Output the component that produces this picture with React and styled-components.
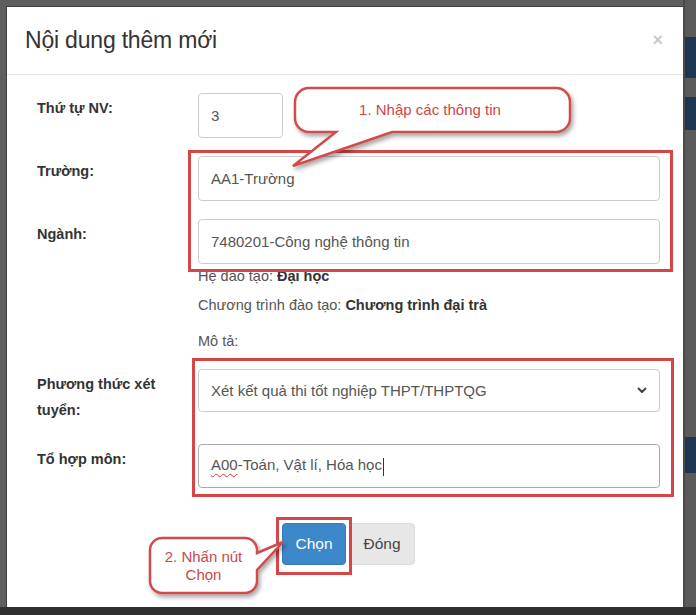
import React from 'react';
import styled, { createGlobalStyle } from 'styled-components';

const GlobalStyle = createGlobalStyle`
  html, body {
    margin: 0;
    padding: 0;
    background: #5e5e5e;
  }
  body {
    font-family: "Liberation Sans", Arial, sans-serif;
  }
  * { box-sizing: border-box; }
`;

const Page = styled.div`
  position: relative;
  width: 696px;
  height: 615px;
  overflow: hidden;
  display: flex;
  flex-direction: column;
  background: #5e5e5e;
`;

const Stage = styled.div`
  display: flex;
  height: 607px;
`;

const ModalWrap = styled.div`
  padding: 7px 0 0 7px;
`;

const Modal = styled.div`
  width: 676px;
  height: 600px;
  background: #fff;
  display: flex;
  flex-direction: column;
  box-shadow: 0 0 0 1px rgba(0, 0, 0, 0.35);
`;

const Header = styled.div`
  height: 68px;
  border-bottom: 1px solid #e5e5e5;
  display: flex;
  align-items: center;
  justify-content: space-between;
  padding: 0 20px 0 18px;
`;

const Title = styled.h4`
  margin: 0;
  font-size: 23px;
  font-weight: normal;
  color: #333;
  letter-spacing: -0.2px;
`;

const Close = styled.span`
  font-size: 18px;
  font-weight: bold;
  color: #cacaca;
`;

const Body = styled.div`
  padding: 18px 23px 0 30px;
`;

const Row = styled.div`
  display: grid;
  grid-template-columns: 161px 1fr;
  margin-top: ${p => p.$mt ?? 0}px;
  margin-bottom: ${p => p.$mb ?? 18}px;
`;

const Label = styled.div`
  font-size: 14.5px;
  font-weight: bold;
  line-height: 26px;
  padding-top: 2px;
  padding-right: 28px;
  color: #333;
`;

const Field = styled.div`
  width: ${p => p.$w ? `${p.$w}px` : '100%'};
  height: ${p => p.$h ?? 45}px;
  border: 1px solid ${p => p.$active ? '#a9a9a9' : '#ccc'};
  border-radius: 4px;
  padding: 0 12px;
  display: flex;
  align-items: center;
  justify-content: space-between;
  font-size: 15px;
  color: #555;
  background: #fff;
`;

const Typo = styled.span`
  text-decoration: underline wavy #e03030;
  text-decoration-thickness: 1px;
  text-underline-offset: 3px;
`;

const Caret = styled.span`
  display: inline-block;
  width: 1px;
  height: 18px;
  background: #333;
  vertical-align: middle;
  margin-left: 1px;
`;

const Info = styled.div`
  margin-left: 161px;
  font-size: 14.5px;
  color: #555;
`;

const InfoLine = styled.div`
  line-height: 20px;
  margin-top: ${p => p.$mt}px;
  b { color: #333; }
`;

const Footer = styled.div`
  display: flex;
  justify-content: center;
  margin-top: 35px;
`;

const Button = styled.button`
  height: 42px;
  width: ${p => p.$w}px;
  border-radius: 4px;
  font-family: inherit;
  font-size: 15.5px;
  border: 1px solid ${p => p.$primary ? '#3479b9' : '#dcdcdc'};
  background: ${p => p.$primary ? '#3d87cb' : '#e7e7e7'};
  color: ${p => p.$primary ? '#fff' : '#444'};
  margin-left: ${p => p.$ml ?? 0}px;
`;

const SideStrip = styled.div`
  flex: 1;
  display: flex;
  flex-direction: column;
  border-left: 2px solid #4a4a4a;
`;

const Band = styled.div`
  height: ${p => p.$h}px;
  background: ${p => p.$navy ? '#1e3650' : '#5a5a5a'};
`;

const BottomBar = styled.div`
  height: 8px;
  background: #2f2f2f;
`;

const Highlight = styled.div`
  position: absolute;
  left: ${p => p.$x}px;
  top: ${p => p.$y}px;
  width: ${p => p.$w}px;
  height: ${p => p.$h}px;
  border: 3px solid #d64646;
  pointer-events: none;
`;

const Overlay = styled.svg`
  position: absolute;
  left: 0;
  top: 0;
  pointer-events: none;
`;

const Note = styled.div`
  position: absolute;
  left: ${p => p.$x}px;
  top: ${p => p.$y}px;
  width: ${p => p.$w}px;
  height: ${p => p.$h}px;
  display: flex;
  align-items: center;
  justify-content: center;
  text-align: center;
  font-size: 15px;
  line-height: 18px;
  color: #cc4747;
`;

const Chevron = () => (
  <svg width="10" height="7" viewBox="0 0 10 7">
    <path d="M1.5 1.5 L5 5 L8.5 1.5" fill="none" stroke="#444" strokeWidth="2" strokeLinecap="round" strokeLinejoin="round" />
  </svg>
);

const bubble1 =
  'M309 88 H556 A14 14 0 0 1 570 102 V118 A14 14 0 0 1 556 132 H392 L293 166 L336 132 H309 A14 14 0 0 1 295 118 V102 A14 14 0 0 1 309 88 Z';
const bubble2 =
  'M162 538 H245 A12 12 0 0 1 257 550 V553 L283 542 L257 570 V581 A12 12 0 0 1 245 593 H162 A12 12 0 0 1 150 581 V550 A12 12 0 0 1 162 538 Z';

export default function App() {
  return (
    <>
      <GlobalStyle />
      <Page>
        <Stage>
          <ModalWrap>
            <Modal>
              <Header>
                <Title>Nội dung thêm mới</Title>
                <Close>×</Close>
              </Header>
              <Body>
                <Row>
                  <Label>Thứ tự NV:</Label>
                  <Field $w={85}>3</Field>
                </Row>
                <Row>
                  <Label>Trường:</Label>
                  <Field>AA1-Trường</Field>
                </Row>
                <Row $mb={0}>
                  <Label>Ngành:</Label>
                  <Field>7480201-Công nghệ thông tin</Field>
                </Row>
                <Info>
                  <InfoLine $mt={2}>Hệ đào tạo: <b>Đại học</b></InfoLine>
                  <InfoLine $mt={9}>Chương trình đào tạo: <b>Chương trình đại trà</b></InfoLine>
                  <InfoLine $mt={16}>Mô tả:</InfoLine>
                </Info>
                <Row $mt={18} $mb={21}>
                  <Label>Phương thức xét tuyển:</Label>
                  <Field $h={43}>
                    <span>Xét kết quả thi tốt nghiệp THPT/THPTQG</span>
                    <Chevron />
                  </Field>
                </Row>
                <Row $mb={0}>
                  <Label>Tổ hợp môn:</Label>
                  <Field $h={44} $active>
                    <span>
                      <Typo>A00</Typo>-Toán, Vật lí, Hóa học<Caret />
                    </span>
                  </Field>
                </Row>
                <Footer>
                  <Button $primary $w={64}>Chọn</Button>
                  <Button $w={66} $ml={3}>Đóng</Button>
                </Footer>
              </Body>
            </Modal>
          </ModalWrap>
          <SideStrip>
            <Band $h={37} />
            <Band $h={41} $navy />
            <Band $h={19} />
            <Band $h={33} $navy />
            <Band $h={307} />
            <Band $h={36} $navy />
            <Band $h={134} />
          </SideStrip>
        </Stage>
        <BottomBar />

        <Highlight $x={188} $y={150} $w={485} $h={122} />
        <Highlight $x={192} $y={358} $w={482} $h={139} />
        <Highlight $x={276} $y={517} $w={76} $h={58} />

        <Overlay width="696" height="615" viewBox="0 0 696 615">
          <defs>
            <filter id="shadow" x="-20%" y="-20%" width="140%" height="160%">
              <feDropShadow dx="2" dy="3" stdDeviation="2" floodColor="#000" floodOpacity="0.35" />
            </filter>
          </defs>
          <path d={bubble1} fill="#fff" stroke="#d04c4c" strokeWidth="2.5" filter="url(#shadow)" />
          <path d={bubble2} fill="#fff" stroke="#d04c4c" strokeWidth="2.5" filter="url(#shadow)" />
        </Overlay>
        <Note $x={295} $y={88} $w={270} $h={44}>1. Nhập các thông tin</Note>
        <Note $x={150} $y={538} $w={107} $h={55}>2. Nhấn nút<br />Chọn</Note>
      </Page>
    </>
  );
}
